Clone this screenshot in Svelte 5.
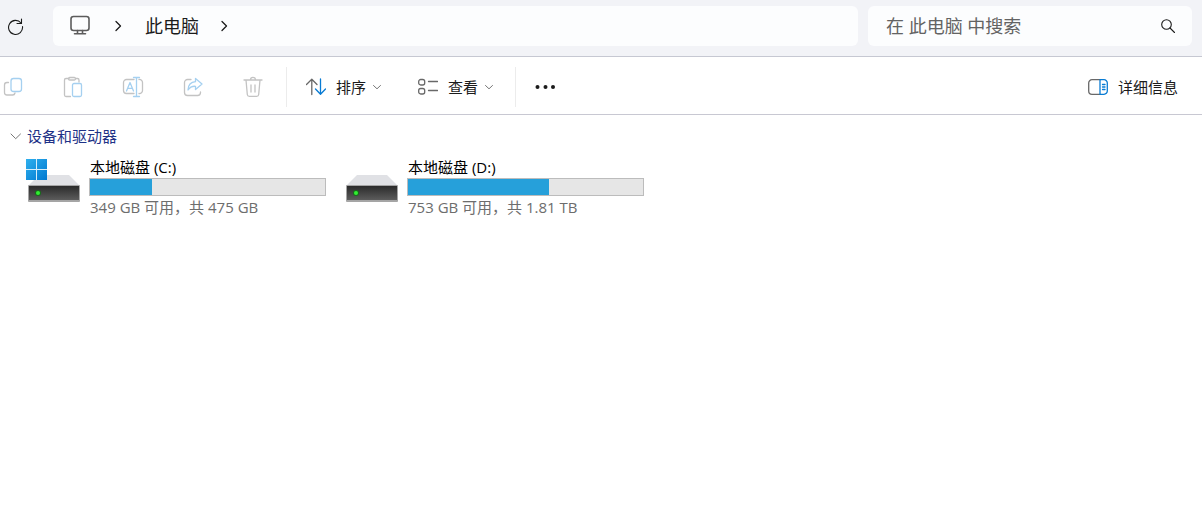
<script lang="ts">
  interface Drive {
    name: string;
    detail: string;
    used: number;
    system?: boolean;
  }

  const drives: Drive[] = [
    { name: '本地磁盘 (C:)', detail: '349 GB 可用，共 475 GB', used: 26.5, system: true },
    { name: '本地磁盘 (D:)', detail: '753 GB 可用，共 1.81 TB', used: 60 },
  ];

  let query = $state('');
  let expanded = $state(true);
</script>

{#snippet crumbArrow()}
  <svg class="crumb-arrow" width="12" height="12" viewBox="0 0 12 12" aria-hidden="true">
    <path d="M4 1.500 8.500 6 4 10.500" />
  </svg>
{/snippet}

{#snippet smallArrow()}
  <svg class="small-arrow" width="10" height="10" viewBox="0 0 10 10" aria-hidden="true">
    <path d="M1.500 3.500 5 6.800l3.500-3.300" />
  </svg>
{/snippet}

<div class="explorer">
  <header class="nav">
    <button class="refresh" type="button" aria-label="刷新">
      <svg width="18" height="18" viewBox="0 0 18 18">
        <path d="M15 6A7 7 0 1 0 16.500 9.500" />
        <path d="M15.500 2v4.500H11" />
      </svg>
    </button>
    <nav class="address" aria-label="地址">
      <button class="root" type="button" aria-label="根目录">
        <svg width="22" height="22" viewBox="0 0 22 22">
          <rect x="2" y="1.500" width="18" height="14" rx="2.500" />
          <path d="M8.500 15.500v3M13.500 15.500v3M5.500 18.700h11" />
        </svg>
      </button>
      {@render crumbArrow()}
      <button class="crumb" type="button">此电脑</button>
      {@render crumbArrow()}
    </nav>
    <form class="search" role="search">
      <input type="text" aria-label="搜索" placeholder="在 此电脑 中搜索" bind:value={query} />
      <button type="submit" aria-label="开始搜索">
        <svg width="16" height="16" viewBox="0 0 16 16">
          <circle cx="6.500" cy="6.500" r="4.800" />
          <path d="m10 10 4.500 4.500" />
        </svg>
      </button>
    </form>
  </header>

  <div class="toolbar" role="toolbar" aria-label="命令栏">
    <div class="edit">
      <button type="button" disabled aria-label="复制">
        <svg width="24" height="24" viewBox="0 0 24 24">
          <path class="grey" d="M7.500 7.500H6A2.500 2.500 0 0 0 3.500 10v7.500A2.500 2.500 0 0 0 6 20h5.500a2.500 2.500 0 0 0 2.500-2" />
          <rect class="blue" x="10" y="3.500" width="10.500" height="13" rx="2.500" />
        </svg>
      </button>
      <button type="button" disabled aria-label="粘贴">
        <svg width="24" height="24" viewBox="0 0 24 24">
          <path class="grey" d="M8 3.500H5A1.500 1.500 0 0 0 3.500 5v15A1.500 1.500 0 0 0 5 21.500h4.500M15 3.500h1.500A1.500 1.500 0 0 1 18 5v2" />
          <rect class="grey" x="7.500" y="2.500" width="7" height="2.500" rx="1.200" />
          <rect class="blue" x="11.500" y="8.500" width="9" height="13" rx="1.500" />
        </svg>
      </button>
      <button type="button" disabled aria-label="重命名">
        <svg width="24" height="24" viewBox="0 0 24 24">
          <path class="grey" d="M13 4.500H5.500a3 3 0 0 0-3 3v8a3 3 0 0 0 3 3H13M18 4.500a3 3 0 0 1 3.500 3v8a3 3 0 0 1-3.500 3" />
          <path class="blue" d="M15.500 2.500v19M12.500 2.500h6M12.500 21.500h6M5.500 16l3.500-8.500 3.500 8.500M6.700 13.300h4.600" />
        </svg>
      </button>
      <button type="button" disabled aria-label="共享">
        <svg width="24" height="24" viewBox="0 0 24 24">
          <path class="grey" d="M10 4.500H6.500a3 3 0 0 0-3 3v10a3 3 0 0 0 3 3h10a3 3 0 0 0 3-3V17" />
          <path class="blue" d="M14.500 3.500 21 9l-6.500 5.500v-3.200c-3-.3-5.500.7-7.500 3.700.2-5 2.800-8 7.500-8.300Z" />
        </svg>
      </button>
      <button type="button" disabled aria-label="删除">
        <svg width="24" height="24" viewBox="0 0 24 24">
          <path class="grey" d="M3 5h18M9.500 4.800a2.500 2.500 0 0 1 5 0M5 5l1.300 14.500a2 2 0 0 0 2 1.800h7.400a2 2 0 0 0 2-1.800L19 5M10 10v7M14 10v7" />
        </svg>
      </button>
    </div>
    <span class="divider"></span>
    <div class="arrange">
      <button type="button">
        <svg width="20" height="20" viewBox="0 0 20 20" aria-hidden="true">
          <path class="dark" d="M5.800 17.500v-15M.5 7.500l5.300-5.300 5.200 5.300" />
          <path class="accent" d="M14.500 2v15M9.500 12l5 5.200 5-5.200" />
        </svg>
        排序
        {@render smallArrow()}
      </button>
      <button type="button">
        <svg width="20" height="20" viewBox="0 0 20 20" aria-hidden="true">
          <rect class="dark" x=".7" y="2.500" width="6" height="5.500" rx="2" />
          <rect class="dark" x=".7" y="11.500" width="6" height="5.500" rx="2" />
          <path class="dark" d="M10.500 4.500h9M10.500 13.500h9" />
        </svg>
        查看
        {@render smallArrow()}
      </button>
    </div>
    <span class="divider"></span>
    <button class="more" type="button" aria-label="更多">
      <svg width="20" height="6" viewBox="0 0 20 6">
        <circle cx="2.500" cy="3" r="2" />
        <circle cx="10.500" cy="3" r="2" />
        <circle cx="18" cy="3" r="2" />
      </svg>
    </button>
    <button class="details" type="button">
      <svg width="20" height="20" viewBox="0 0 20 20" aria-hidden="true">
        <path class="dark" d="M12 2.700H4A3.300 3.300 0 0 0 .7 6v8A3.300 3.300 0 0 0 4 17.300h8" />
        <path class="accent" d="M12 2.700h4A3.300 3.300 0 0 1 19.300 6v8a3.300 3.300 0 0 1-3.300 3.300h-4ZM14.500 7.500h2.500M14.500 10h2.500M14.500 12.500h2.500" />
      </svg>
      详细信息
    </button>
  </div>

  <main>
    <button class="group" type="button" aria-expanded={expanded} onclick={() => (expanded = !expanded)}>
      <svg class:collapsed={!expanded} width="12" height="12" viewBox="0 0 12 12" aria-hidden="true">
        <path d="M1 4l4.700 4.700L10.500 4" />
      </svg>
      设备和驱动器
    </button>
    {#if expanded}
      <ul class="drives">
        {#each drives as drive, i (drive.name)}
          <li class="drive">
            <svg class="disk" width="56" height="46" viewBox="0 0 56 46" aria-hidden="true">
              <defs>
                <linearGradient id="disk-face-{i}" x1="0" y1="0" x2="0" y2="1">
                  <stop offset="0" stop-color="#2b2b2b" />
                  <stop offset="1" stop-color="#5c5c5c" />
                </linearGradient>
                <linearGradient id="logo-{i}" x1="0" y1="0" x2="1" y2="1">
                  <stop offset="0" stop-color="#2fb0ee" />
                  <stop offset="1" stop-color="#0078d0" />
                </linearGradient>
              </defs>
              <path d="M13 18h30l11 11H2Z" fill="#e0e1e5" />
              <rect x="2" y="28" width="52" height="17" rx="1" fill="#a5a5a5" />
              <rect x="3" y="29" width="50" height="14" fill="url(#disk-face-{i})" />
              <circle cx="12" cy="36" r="3" fill="#176d1b" />
              <circle cx="12" cy="36" r="2" fill="#31ee31" />
              {#if drive.system}
                <rect width="21" height="21" y="2" fill="url(#logo-{i})" />
                <path class="logo-cross" d="M10.500 2v21M0 12.500h21" />
              {/if}
            </svg>
            <div class="info">
              <label for="usage-{i}">{drive.name}</label>
              <progress id="usage-{i}" max="100" value={drive.used}></progress>
              <span class="detail">{drive.detail}</span>
            </div>
          </li>
        {/each}
      </ul>
    {/if}
  </main>
</div>

<style>
  :global(body) {
    margin: 0;
    background: #fff;
  }

  .explorer {
    min-height: 100vh;
    font-family: 'Open Sans', 'Noto Sans CJK SC', sans-serif;
    font-size: 15px;
    line-height: 20px;
    color: #1b1b1b;
  }

  svg {
    flex: none;
    fill: none;
    stroke-width: 1.3;
    stroke-linecap: round;
    stroke-linejoin: round;
  }

  button {
    display: flex;
    align-items: center;
    padding: 0;
    border: 0;
    background: none;
    font: inherit;
    color: inherit;
    white-space: nowrap;
  }

  .nav {
    display: flex;
    align-items: center;
    gap: 10px;
    padding: 6px 10px 10px 6px;
    border-bottom: 1px solid #c6c8d2;
    background: #f2f3f7;
    font-size: 18px;
    line-height: 24px;
    stroke: #1b1b1b;
  }

  .refresh {
    margin-right: 19px;
  }

  .refresh svg {
    stroke-width: 1.1;
  }

  .address,
  .search {
    display: flex;
    align-items: center;
    box-sizing: border-box;
    height: 40px;
    border-radius: 6px;
    background: #fcfdfe;
  }

  .address {
    flex: 1;
    padding-left: 16px;
  }

  .root {
    margin-right: 21px;
    stroke: #5c5c5c;
  }

  .root svg {
    stroke-width: 1.6;
  }

  .crumb {
    margin: 0 19px 0 21px;
  }

  .search {
    width: 324px;
    padding: 0 16px 0 18px;
  }

  .search input {
    flex: 1;
    min-width: 0;
    padding: 0;
    border: 0;
    outline: 0;
    background: none;
    font: inherit;
    color: inherit;
  }

  .search input::placeholder {
    color: #636363;
    opacity: 1;
  }

  .search svg {
    stroke-width: 1.1;
  }

  .toolbar {
    display: flex;
    align-items: center;
    padding: 10px 24px 7px 1px;
    border-bottom: 1px solid #c8c8d2;
  }

  .edit,
  .arrange {
    display: flex;
    gap: 36px;
  }

  .divider {
    width: 1px;
    height: 40px;
    margin: 0 19px 0 21px;
    background: #ececec;
  }

  .arrange button,
  .details {
    gap: 10px;
  }

  .small-arrow {
    margin-left: -4px;
    stroke: #777;
    stroke-width: 1;
  }

  .grey {
    stroke: #c3c3c3;
  }

  .blue {
    stroke: #a5d0f0;
  }

  .dark {
    stroke: #686868;
  }

  .accent {
    stroke: #087bd3;
  }

  .more svg {
    fill: #1b1b1b;
  }

  .details {
    margin-left: auto;
  }

  main {
    padding: 6px 10px;
  }

  .group {
    gap: 5px;
    height: 30px;
    color: #1e3287;
    stroke: #777;
  }

  .group svg {
    stroke-width: 1;
  }

  .group .collapsed {
    transform: rotate(-90deg);
  }

  .drives {
    display: flex;
    flex-wrap: wrap;
    gap: 18px;
    margin: 6px 0 0;
    padding: 0 0 0 16px;
    list-style: none;
  }

  .drive {
    display: flex;
    gap: 7px;
    width: 300px;
  }

  .info {
    display: flex;
    flex: 1;
    flex-direction: column;
    gap: 1px;
  }

  .logo-cross {
    stroke: #d9effb;
    stroke-width: 1;
    stroke-linecap: butt;
  }

  label,
  .detail {
    padding-left: 1px;
  }

  label {
    color: #000;
  }

  .detail {
    color: #6d6d6d;
  }

  progress {
    display: block;
    box-sizing: border-box;
    width: 100%;
    height: 18px;
    border: 1px solid #bcbcbc;
    background: #e6e6e6;
    appearance: none;
  }

  progress::-webkit-progress-bar {
    background: #e6e6e6;
  }

  progress::-webkit-progress-value {
    background: #26a0da;
  }
</style>
